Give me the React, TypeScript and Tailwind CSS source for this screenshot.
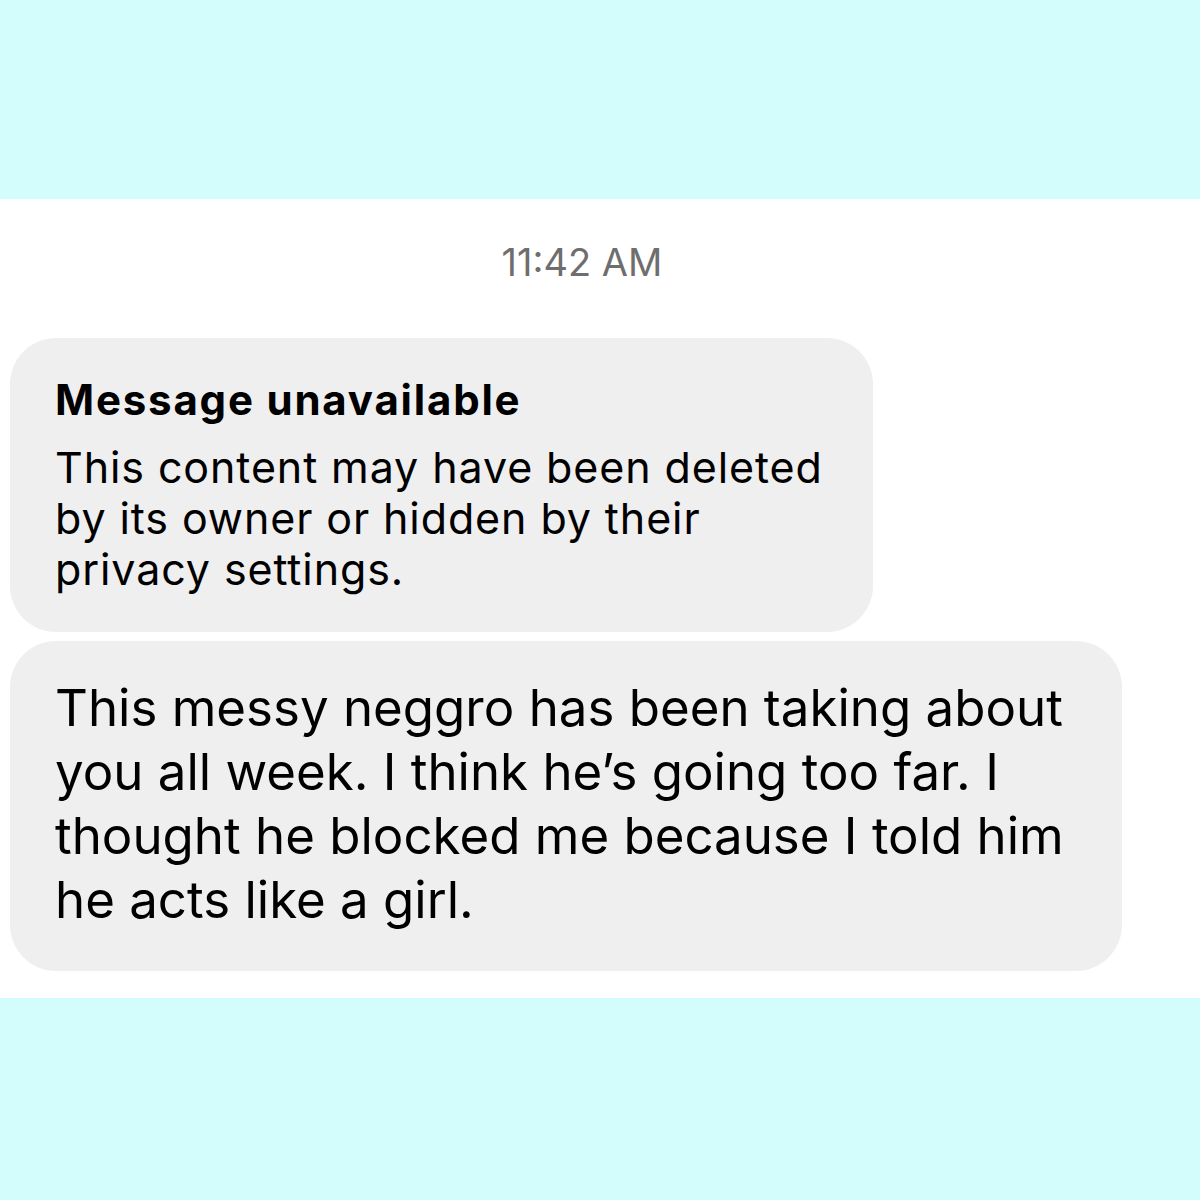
export default function App() {
  return (
    <div className="flex h-[1200px] w-[1200px] flex-col bg-[#d3fdfd] font-['Inter',sans-serif]">
      <div className="h-[199px]" />
      <div className="flex h-[799px] flex-col bg-white">
        <div className="pt-[43px] pr-[36px] text-center text-[38px] leading-[40px] text-[#6e6e6e]">
          11:42 AM
        </div>
        <div className="mt-[56px] ml-[10px] w-[863px] rounded-[46px] bg-[#efefef] pl-[45px] pr-[20px] pt-[36px] pb-[37px] text-black">
          <div className="text-[42px] font-bold leading-[52px] tracking-[1.8px]">Message unavailable</div>
          <div className="mt-[16px] text-[43px] leading-[51px] tracking-[0.9px]">
            This content may have been deleted
            <br />
            by its owner or hidden by their
            <br />
            privacy settings.
          </div>
        </div>
        <div className="mt-[9px] ml-[10px] w-[1112px] rounded-[46px] bg-[#efefef] pl-[45px] pr-[20px] pt-[35px] pb-[39px] text-black">
          <div className="text-[51px] leading-[64px]">
            This messy neggro has been taking about
            <br />
            you all week. I think he’s going too far. I
            <br />
            thought he blocked me because I told him
            <br />
            he acts like a girl.
          </div>
        </div>
      </div>
    </div>
  );
}
